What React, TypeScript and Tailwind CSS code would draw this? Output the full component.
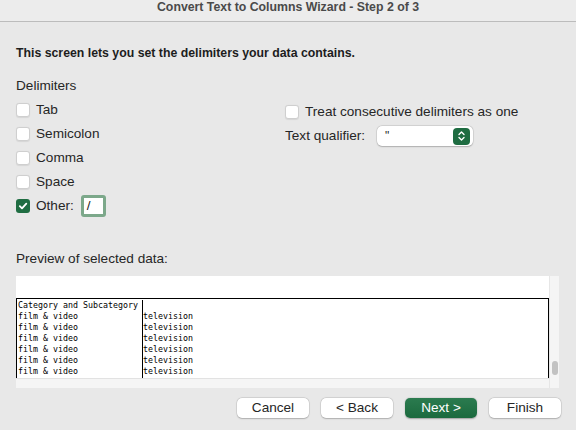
import React from "react";

const rows = Array.from({ length: 6 }, () => ["film & video", "television"]);

function Checkbox({ checked = false }: { checked?: boolean }) {
  if (checked) {
    return (
      <span className="flex h-[14px] w-[14px] items-center justify-center rounded-[3px] bg-[#1f6d42]">
        <svg width="10" height="10" viewBox="0 0 10 10" fill="none">
          <path d="M1.8 5.2 L4 7.4 L8.3 2.6" stroke="white" strokeWidth="1.8" strokeLinecap="round" strokeLinejoin="round" />
        </svg>
      </span>
    );
  }
  return (
    <span className="block h-[14px] w-[14px] rounded-[3px] border border-[#cfcfcf] bg-white shadow-[0_0.5px_1px_rgba(0,0,0,0.08)]" />
  );
}

function CheckRow({ label, checked, children }: { label: string; checked?: boolean; children?: React.ReactNode }) {
  return (
    <div className="flex h-6 items-center">
      <Checkbox checked={checked} />
      <span className="ml-[6px]">{label}</span>
      {children}
    </div>
  );
}

function Button({ label, primary }: { label: string; primary?: boolean }) {
  return (
    <button
      className={
        primary
          ? "flex h-5 w-[72px] items-center justify-center rounded-[5px] bg-gradient-to-b from-[#2b7b4f] to-[#1b6a3e] text-white font-medium shadow-[0_0.5px_1.5px_rgba(0,0,0,0.3)]"
          : "flex h-5 w-[72px] items-center justify-center rounded-[5px] bg-white text-[#262626] shadow-[0_0_0_0.5px_rgba(0,0,0,0.12),0_0.5px_1.5px_rgba(0,0,0,0.2)]"
      }
    >
      {label}
    </button>
  );
}

export default function App() {
  return (
    <div className="h-[430px] w-[576px] overflow-hidden bg-[#e8e8e8] text-[13.6px] leading-4 text-[#262626] [font-family:'Liberation_Sans',Arial,sans-serif]">
      <div className="flex h-[22px] justify-center border-b border-[#bcbcbc] bg-[#ececec] pt-[1px]">
        <span className="text-[12.3px] font-bold leading-[13px] text-[#4a4a4a]">Convert Text to Columns Wizard - Step 2 of 3</span>
      </div>

      <div className="px-4">
        <p className="mt-[23px] text-[12.3px] font-bold text-[#1d1d1d]">This screen lets you set the delimiters your data contains.</p>

        <div className="flex">
          <div className="w-[269px]">
            <div className="mt-[17px]">Delimiters</div>
            <div className="mt-1">
              <CheckRow label="Tab" />
              <CheckRow label="Semicolon" />
              <CheckRow label="Comma" />
              <CheckRow label="Space" />
              <CheckRow label="Other:" checked>
                <span className="ml-[7px] flex h-[22px] w-[25px] items-center rounded-[3px] bg-[#7ca88a] p-[3px]">
                  <span className="flex h-full w-full items-center bg-white pl-[3px] leading-none">/</span>
                </span>
              </CheckRow>
            </div>
          </div>

          <div className="mt-[39px]">
            <CheckRow label="Treat consecutive delimiters as one" />
            <div className="flex h-6 items-center">
              <span>Text qualifier:</span>
              <div className="ml-[12px] flex h-5 w-[96px] items-center justify-between rounded-[5px] bg-white pl-2 pr-[3px] shadow-[0_0_0_0.5px_rgba(0,0,0,0.12),0_0.5px_1.5px_rgba(0,0,0,0.2)]">
                <span className="text-[12px] leading-none">"</span>
                <span className="flex h-[17px] w-[17px] items-center justify-center rounded-[4px] bg-[#1e6c41]">
                  <svg width="9" height="12" viewBox="0 0 9 12" fill="none">
                    <path d="M2 4.5 L4.5 2 L7 4.5 M2 7.5 L4.5 10 L7 7.5" stroke="white" strokeWidth="1.4" strokeLinecap="round" strokeLinejoin="round" />
                  </svg>
                </span>
              </div>
            </div>
          </div>
        </div>

        <div className="mt-[33px]">Preview of selected data:</div>

        <div className="mt-[9px] flex h-[112px] w-[543px]">
          <div className="flex w-[533px] flex-col">
            <div className="h-[102px] overflow-hidden bg-white pt-[22px]">
              <div className="flex h-full border-l border-r border-t border-black pt-[1px] text-[8.3px] leading-[11px] text-black [font-family:'DejaVu_Sans_Mono',monospace]">
                <div className="w-[126px] border-r border-black pl-[1px]">
                  <div>Category and Subcategory</div>
                  {rows.map((r, i) => (
                    <div key={i}>{r[0]}</div>
                  ))}
                </div>
                <div className="flex-1">
                  <div className="h-[11px]" />
                  {rows.map((r, i) => (
                    <div key={i}>{r[1]}</div>
                  ))}
                </div>
              </div>
            </div>
            <div className="h-[10px] border-t border-[#e2e2e2] bg-[#f5f5f5]" />
          </div>
          <div className="flex w-[10px] flex-col justify-end border-l border-[#e6e6e6] bg-[#f5f5f5] pb-[13px] pl-[2px]">
            <div className="h-[14px] w-[6px] rounded-full bg-[#c2c2c2]" />
          </div>
        </div>

        <div className="-mr-px mt-[10px] flex justify-end gap-3">
          <Button label="Cancel" />
          <Button label="< Back" />
          <Button label="Next >" primary />
          <Button label="Finish" />
        </div>
      </div>
    </div>
  );
}
